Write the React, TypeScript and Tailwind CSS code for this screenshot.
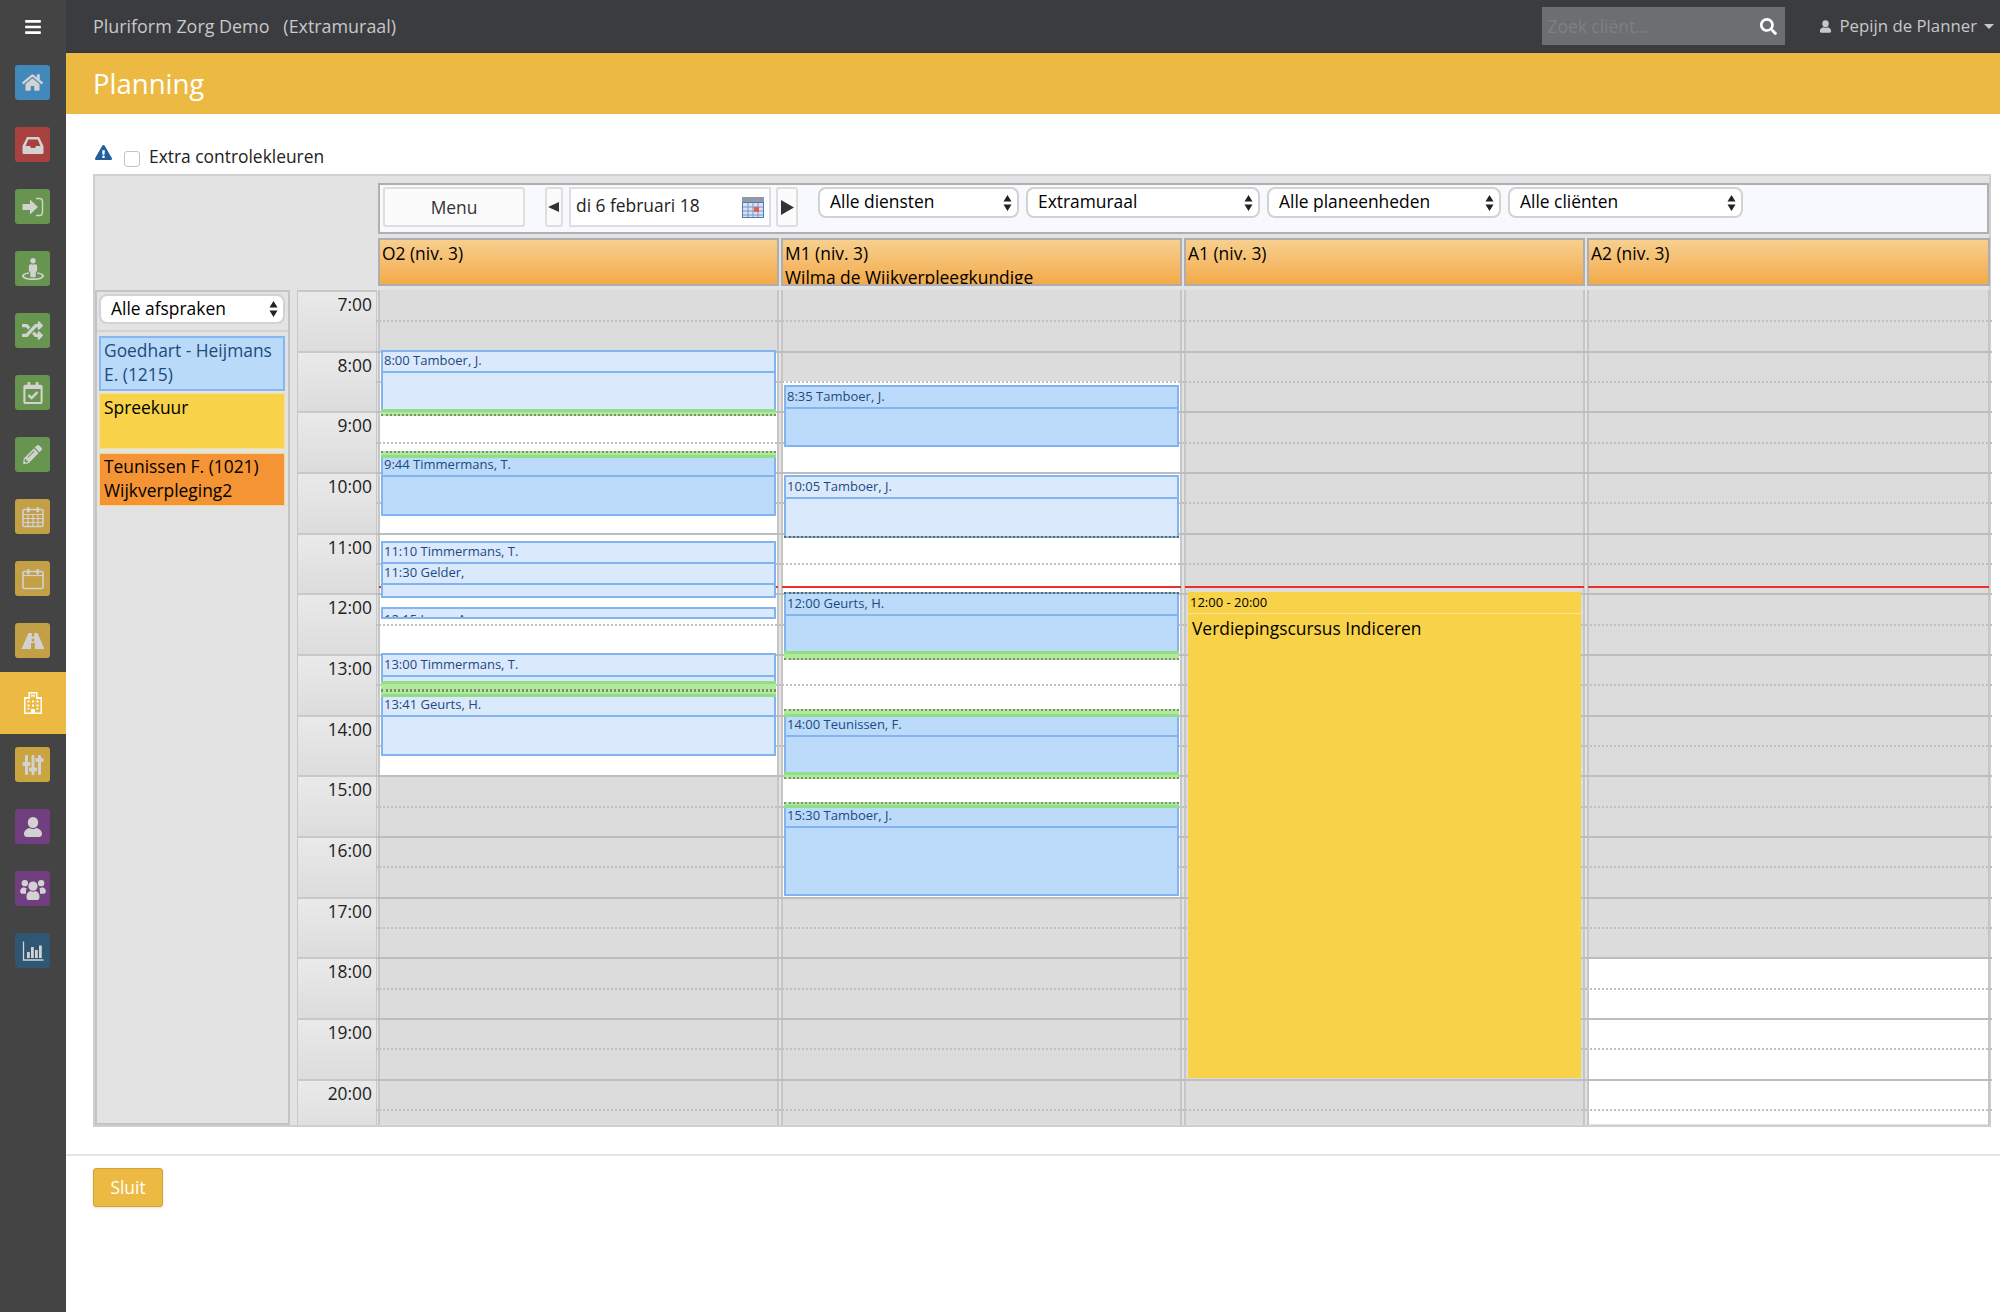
import type { ReactNode } from 'react';
import {
  FaBars,
  FaExclamationTriangle,
  FaHome,
  FaPencilAlt,
  FaRandom,
  FaRegCalendarCheck,
  FaSearch,
  FaStreetView,
} from 'react-icons/fa';

const GRID_TOP = 290;
const HOURS = [7, 8, 9, 10, 11, 12, 13, 14, 15, 16, 17, 18, 19, 20];

type Appointment = {
  top: number;
  bottom: number;
  divider: number;
  label: string;
  dark?: boolean;
  greenTop?: number;
  greenBottom?: number;
};

// y values are page pixels, measured from the reference
const columns: {
  title: string;
  sub?: string;
  white: [number, number];
  items: Appointment[];
}[] = [
  {
    title: 'O2 (niv. 3)',
    white: [2, 16],
    items: [
      { top: 350, bottom: 416, divider: 371, label: '8:00 Tamboer, J.', greenBottom: 5 },
      { top: 451, bottom: 516, divider: 475, label: '9:44 Timmermans, T.', dark: true, greenTop: 5 },
      { top: 541, bottom: 598, divider: 562, label: '11:10 Timmermans, T.' },
      { top: 562, bottom: 598, divider: 583, label: '11:30 Gelder,' },
      { top: 607, bottom: 619, divider: 700, label: '12:15 Jager, A.' },
      { top: 653, bottom: 691, divider: 675, label: '13:00 Timmermans, T.', greenBottom: 8 },
      { top: 690, bottom: 756, divider: 715, label: '13:41 Geurts, H.', greenTop: 5 },
    ],
  },
  {
    title: 'M1 (niv. 3)',
    sub: 'Wilma de Wijkverpleegkundige',
    white: [3, 20],
    items: [
      { top: 385, bottom: 447, divider: 407, label: '8:35 Tamboer, J.', dark: true },
      { top: 475, bottom: 538, divider: 497, label: '10:05 Tamboer, J.', greenBottom: 1 },
      { top: 592, bottom: 660, divider: 614, label: '12:00 Geurts, H.', dark: true, greenTop: 1, greenBottom: 7 },
      { top: 709, bottom: 779, divider: 735, label: '14:00 Teunissen, F.', dark: true, greenTop: 6, greenBottom: 5 },
      { top: 802, bottom: 896, divider: 826, label: '15:30 Tamboer, J.', dark: true, greenTop: 4 },
    ],
  },
  { title: 'A1 (niv. 3)', white: [0, 0], items: [] },
  { title: 'A2 (niv. 3)', white: [22, 28], items: [] },
];

/* Hand drawn sidebar glyphs, the icon packages have no close match for these */
function Glyph({ children, size = 24 }: { children: ReactNode; size?: number }) {
  return (
    <svg width={size} height={size} viewBox="0 0 24 24" fill="currentColor">
      {children}
    </svg>
  );
}

const InboxIcon = () => (
  <Glyph>
    <path fillRule="evenodd" d="M6 4h12l4.500 9v6.500a1.500 1.500 0 0 1-1.500 1.500H3a1.500 1.500 0 0 1-1.500-1.500V13zM7.300 6.500 4.600 13H9l1 2h4l1-2h4.400l-2.700-6.500z" />
  </Glyph>
);

const SignInIcon = () => (
  <Glyph>
    <path d="M1.500 9H9V4.500l8 7.500-8 7.500V15H1.500z" />
    <path d="M15 3.500h3.500a3 3 0 0 1 3 3v11a3 3 0 0 1-3 3H15" fill="none" stroke="currentColor" strokeWidth="1.400" />
  </Glyph>
);

const CalendarGridIcon = () => (
  <Glyph>
    <rect x="2" y="4.500" width="20" height="17" rx="1.500" fill="none" stroke="currentColor" strokeWidth="1.600" />
    <path d="M2 9.500h20M2 13.500h20M2 17.500h20M7 9.500v12M12 9.500v12M17 9.500v12" stroke="currentColor" strokeWidth="1.200" />
    <rect x="6" y="2" width="2.600" height="5.500" rx="1.200" />
    <rect x="15.400" y="2" width="2.600" height="5.500" rx="1.200" />
  </Glyph>
);

const CalendarBlankIcon = () => (
  <Glyph>
    <rect x="2" y="4.500" width="20" height="17" rx="1.500" fill="none" stroke="currentColor" strokeWidth="1.600" />
    <path d="M2 8.500h20" stroke="currentColor" strokeWidth="1.200" />
    <rect x="6" y="2" width="2.600" height="5.500" rx="1.200" />
    <rect x="15.400" y="2" width="2.600" height="5.500" rx="1.200" />
  </Glyph>
);

const RoadIcon = () => (
  <Glyph>
    <path d="M7.500 4h3.300v3.500h2.400V4h3.300L23.500 20h-9.600v-6h-3.800v6H.5zM10.800 9.500v3h2.400v-3z" fillRule="evenodd" />
  </Glyph>
);

const HospitalIcon = () => (
  <Glyph>
    <path fillRule="evenodd" d="M7.500 1h9v5H21v17H3V6h4.500zM9 2.500V8H4.500v13.500h5.500V18h4v3.500h5.500V8H15V2.500z" />
    <path d="M10.300 3.300h1v3h-1zM12.700 3.300h1v3h-1zM10.300 4.300h3.400v1h-3.400z" />
    <path d="M6.500 9.500h2v2h-2zM11 9.500h2v2h-2zM15.500 9.500h2v2h-2zM6.500 13.500h2v2h-2zM11 13.500h2v2h-2zM15.500 13.500h2v2h-2zM6.500 17h2v1.500h-2zM15.500 17h2v1.500h-2z" />
  </Glyph>
);

const SlidersIcon = () => (
  <Glyph>
    <rect x="4" y="2" width="3" height="20" rx="1" />
    <rect x="10.500" y="2" width="3" height="20" rx="1" />
    <rect x="17" y="2" width="3" height="20" rx="1" />
    <rect x="1.500" y="9" width="8" height="4" rx="1" />
    <rect x="8" y="14.500" width="8" height="4" rx="1" />
    <rect x="14.500" y="5" width="8" height="4" rx="1" />
  </Glyph>
);

const UserIcon = ({ size = 24 }: { size?: number }) => (
  <Glyph size={size}>
    <ellipse cx="12" cy="7.500" rx="5.200" ry="5.500" />
    <path d="M3 19c0-3.500 3-5.500 5.500-6 2 1.300 5 1.300 7 0 2.500.5 5.500 2.500 5.500 6 0 2-1.500 3-3 3H6c-1.500 0-3-1-3-3z" />
  </Glyph>
);

const UsersIcon = () => (
  <Glyph size={28}>
    <circle cx="5" cy="7" r="2.700" />
    <circle cx="19" cy="7" r="2.700" />
    <circle cx="12" cy="9.500" r="4" />
    <path d="M1 14c0-2 1.500-3.300 3-3.500 1 .7 1.700.8 2.500.5-.3 1.500-.6 3-.5 5H2.500C1.500 16 1 15 1 14zM23 14c0-2-1.500-3.300-3-3.500-1 .7-1.700.8-2.500.5.300 1.500.6 3 .5 5h3.500c1 0 1.500-1 1.500-2z" />
    <path d="M6.500 18c0-2.500 2-4 3.500-4.300 1.300.8 2.700.8 4 0 1.500.3 3.500 1.800 3.500 4.300v1.500c0 1.200-1 2-2 2H8.500c-1 0-2-.8-2-2z" />
  </Glyph>
);

const ChartIcon = () => (
  <Glyph>
    <path d="M2.500 2.500v18.500h20" fill="none" stroke="currentColor" strokeWidth="1.300" />
    <rect x="6" y="13" width="2.800" height="6" />
    <rect x="10" y="8" width="2.800" height="11" />
    <rect x="14" y="11" width="2.800" height="8" />
    <rect x="18" y="6.500" width="2.800" height="12.500" />
  </Glyph>
);

const sideItems: { icon: ReactNode; color: string; active?: boolean }[] = [
  { icon: <FaHome className="text-[21px]" />, color: 'bg-[#4288bb]' },
  { icon: <InboxIcon />, color: 'bg-[#a94141]' },
  { icon: <SignInIcon />, color: 'bg-[#679550]' },
  { icon: <FaStreetView className="text-[22px]" />, color: 'bg-[#679550]' },
  { icon: <FaRandom className="text-[21px]" />, color: 'bg-[#679550]' },
  { icon: <FaRegCalendarCheck className="text-[22px]" />, color: 'bg-[#679550]' },
  { icon: <FaPencilAlt className="text-[19px]" />, color: 'bg-[#679550]' },
  { icon: <CalendarGridIcon />, color: 'bg-[#c39f45]' },
  { icon: <CalendarBlankIcon />, color: 'bg-[#c39f45]' },
  { icon: <RoadIcon />, color: 'bg-[#c39f45]' },
  { icon: <HospitalIcon />, color: 'bg-[#ecba43]', active: true },
  { icon: <SlidersIcon />, color: 'bg-[#c9a441]' },
  { icon: <UserIcon />, color: 'bg-[#713f80]' },
  { icon: <UsersIcon />, color: 'bg-[#713f80]' },
  { icon: <ChartIcon />, color: 'bg-[#2f5672]' },
];

function Sidebar() {
  return (
    <aside className="flex w-[66px] flex-none flex-col bg-[#444444]">
      <div className="flex h-[65px] w-full items-start justify-center pt-[18px] text-[18px] text-white">
        <FaBars />
      </div>
      {sideItems.map((item, i) =>
        item.active ? (
          <div key={i} className="-mt-[13px] mb-[13px] flex h-[62px] w-full items-center justify-center bg-[#ecba43] text-white">
            {item.icon}
          </div>
        ) : (
          <div key={i} className="flex h-[62px] w-full flex-none pl-[15px]">
            <div className={`flex h-[35px] w-[35px] items-center justify-center rounded-[3px] text-[#d2d2d2] ${item.color}`}>
              {item.icon}
            </div>
          </div>
        ),
      )}
    </aside>
  );
}

function Stepper() {
  return (
    <svg width="9" height="18" viewBox="0 0 9 18" className="fill-[#222]">
      <path d="M4.500 1 8.500 7.500H.5zM4.500 17 .5 10.500h8z" />
    </svg>
  );
}

function SelectBox({ label, className }: { label: string; className: string }) {
  return (
    <div className={`flex items-center justify-between rounded-[8px] border-2 border-[#d2d2d2] bg-white pl-[10px] pr-[5px] text-[17.4px] text-black ${className}`}>
      <span className="-mt-[2px]">{label}</span>
      <Stepper />
    </div>
  );
}

function Toolbar() {
  return (
    <div className="flex h-[51px] border-2 border-[#b0b0b0] bg-[#f8f8ff] pl-[3px] pt-[2px]">
      <div className="flex h-[40px] w-[142px] items-center justify-center rounded-[3px] border-2 border-[#dedede] bg-[#fbfbfb] text-[17.4px] text-[#333]">
        Menu
      </div>
      <div className="ml-[20px] flex h-[40px] w-[18px] items-center justify-center rounded-[3px] border-2 border-[#dedede] bg-[#fbfbfb]">
        <svg width="12" height="12" viewBox="0 0 12 12" className="fill-[#333]">
          <path d="M11 1v10L0 6z" />
        </svg>
      </div>
      <div className="ml-[6px] flex h-[40px] w-[202px] items-center justify-between border-2 border-[#dedede] bg-white pb-[4px] pl-[5px] pr-[5px] text-[17.4px] text-[#222]">
        <span>di 6 februari 18</span>
        <svg width="22" height="21" viewBox="0 0 22 21" className="mt-[4px]">
          <rect width="22" height="21" fill="#5878b4" />
          <rect y="0" width="22" height="5" fill="#8e9aa8" />
          <rect x="1" y="6" width="20" height="14" fill="#dbe3f2" />
          <path d="M1 10h20M1 14h20M1 18h20M6 6v14M11 6v14M16 6v14" stroke="#7a93c6" strokeWidth="1" />
          <rect x="12" y="10" width="5" height="5" fill="#e0604a" />
        </svg>
      </div>
      <div className="ml-[5px] flex h-[40px] w-[22px] items-center justify-center rounded-[3px] border-2 border-[#dedede] bg-[#fbfbfb]">
        <svg width="14" height="15" viewBox="0 0 14 15" className="fill-[#333]">
          <path d="M1 0v15l13-7.500z" />
        </svg>
      </div>
      <SelectBox label="Alle diensten" className="ml-[20px] h-[31px] w-[201px]" />
      <SelectBox label="Extramuraal" className="ml-[7px] h-[31px] w-[234px]" />
      <SelectBox label="Alle planeenheden" className="ml-[7px] h-[31px] w-[234px]" />
      <SelectBox label="Alle cliënten" className="ml-[7px] h-[31px] w-[235px]" />
    </div>
  );
}

function LeftPanel() {
  return (
    <div className="h-[835px] w-[195px] flex-none border-2 border-[#c4c4c4] bg-[#e3e3e3]">
      <div className="h-[40px] border-b-2 border-[#d2d2d2] px-[2px] pt-[2px]">
        <SelectBox label="Alle afspraken" className="h-[30px] w-[186px]" />
      </div>
      <div className="flex flex-col pl-[2px] pr-[3px] pt-[4px] text-[17.4px] leading-[24px]">
        <div className="h-[55px] border-2 border-[#86b7f0] bg-[#badafa] px-[3px] text-[#1c4a7c]">
          Goedhart - Heijmans E. (1215)
        </div>
        <div className="mt-[2px] h-[56px] border border-[#f5e18c] bg-[#f8d248] px-[4px] pt-[1px] text-black">
          Spreekuur
        </div>
        <div className="mt-[4px] h-[53px] border border-[#f7d78c] bg-[#f49434] px-[4px] text-black">
          Teunissen F. (1021) Wijkverpleging2
        </div>
      </div>
    </div>
  );
}

function TimeColumn() {
  return (
    <div className="ml-[7px] h-[835px] w-[80px] flex-none overflow-hidden border-x border-[#c8c8c8]">
      {HOURS.map((h) => (
        <div key={h} className="h-[60.67px] border-t-2 border-[#c8c8c8] bg-gradient-to-b from-[#eaeaea] to-[#dcdcdc] pr-[4px] text-right text-[17.4px] leading-[24px] text-[#222]">
          {h}:00
        </div>
      ))}
    </div>
  );
}

function Green({ side, size }: { side: 'top' | 'bottom'; size: number }) {
  if (size <= 2) {
    return (
      <div
        className={
          side === 'top'
            ? 'absolute -inset-x-[2px] -top-[2px] border-t-2 border-dotted border-[#5a6a5a]'
            : 'absolute -inset-x-[2px] -bottom-[2px] border-b-2 border-dotted border-[#5a6a5a]'
        }
      />
    );
  }
  return (
    <div
      className={
        side === 'top'
          ? 'absolute -inset-x-[2px] -top-[2px] flex flex-col justify-end border-t-2 border-dotted border-[#7d8c76] bg-[#b2ea9a]'
          : 'absolute -inset-x-[2px] -bottom-[2px] border-b-2 border-dotted border-[#7d8c76] bg-[#b2ea9a]'
      }
      style={{ height: size + 2 }}
    >
      <div className="h-[3px] bg-[#8fdf8a]" />
    </div>
  );
}

function AppointmentBox({ item }: { item: Appointment }) {
  const shade = item.dark ? 'bg-[#bcdbfa]' : 'bg-[#dbe9fc]';
  const height = item.bottom - item.top;
  const headerHeight = Math.min(item.divider - item.top, height - 2);
  return (
    <div
      className={`absolute left-[1px] right-[1px] border-2 border-[#82b4f0] text-[13px] text-[#1c4a80] ${shade}`}
      style={{ top: item.top - GRID_TOP, height }}
    >
      <div
        className="flex items-center overflow-hidden border-b-2 border-[#82b4f0] pl-[1px] leading-[19px]"
        style={{ height: headerHeight, paddingTop: Math.max((item.greenTop ?? 0) - 2, 0) }}
      >
        <span className={height > 20 ? '-mt-[2px]' : 'mt-[12px]'}>{item.label}</span>
      </div>
      {item.greenTop ? <Green side="top" size={item.greenTop} /> : null}
      {item.greenBottom ? <Green side="bottom" size={item.greenBottom} /> : null}
    </div>
  );
}

function DayColumn({ index }: { index: number }) {
  const col = columns[index];
  const slots = Array.from({ length: 28 }, (_, i) => i);
  return (
    <div className={`relative mr-[2px] h-[835px] flex-none border-x-2 border-[#c6c6c6] ${index === 3 ? 'w-[403px]' : 'w-[401px]'}`}>
      {slots.map((i) => {
        const isWhite = i >= col.white[0] && i < col.white[1];
        return (
          <div key={i} className={`relative ${i === 27 ? 'h-[15px]' : 'h-[30.33px]'} ${isWhite ? 'bg-white' : 'bg-[#dcdcdc]'}`}>
            {i > 0 ? (
              <div
                className={
                  i % 2 === 0
                    ? 'absolute -inset-x-[4px] top-0 border-t-2 border-[#bdbdbd]'
                    : 'absolute -inset-x-[4px] top-0 border-t-2 border-dotted border-[#c0c0c0]'
                }
              />
            ) : null}
          </div>
        );
      })}
      {/* current time line */}
      <div className="absolute -inset-x-[1px] top-[296px] border-t-2 border-[#e8302c]" />
      {index === 2 ? (
        <div className="absolute bottom-[47px] left-[2px] right-[2px] top-[302px] bg-[#f8d248] text-black">
          <div className="h-[22px] border-b border-[#fbe38a] pl-[2px] pt-[1px] text-[13px] leading-[19px]">12:00 - 20:00</div>
          <div className="pl-[4px] pt-[2px] text-[17.4px] leading-[24px]">Verdiepingscursus Indiceren</div>
        </div>
      ) : null}
      {col.items.map((item) => (
        <AppointmentBox key={item.label} item={item} />
      ))}
    </div>
  );
}

function Calendar() {
  return (
    <div className="ml-[27px] mr-[9px] border-2 border-[#cfcfcf] bg-[#e3e3e3]">
      <div className="pl-[283px] pt-[7px]">
        <Toolbar />
        <div className="mt-[4px] flex">
          {columns.map((col, i) => (
            <div
              key={col.title}
              className={`mr-[2px] h-[48px] flex-none overflow-hidden border-2 border-[#aeaeae] bg-gradient-to-b from-[#f7cf8e] to-[#f3aa48] pl-[2px] pt-[1px] text-[17.4px] leading-[24px] text-black ${i === 3 ? 'w-[403px]' : 'w-[401px]'}`}
            >
              <div>{col.title}</div>
              {col.sub ? <div>{col.sub}</div> : null}
            </div>
          ))}
        </div>
      </div>
      <div className="mt-[4px] flex">
        <LeftPanel />
        <TimeColumn />
        <div className="ml-[1px] flex">
          {columns.map((_, i) => (
            <DayColumn key={i} index={i} />
          ))}
        </div>
      </div>
    </div>
  );
}

export default function App() {
  return (
    <div className="flex min-h-[1312px] w-[2000px] overflow-hidden bg-white font-['Open_Sans',sans-serif]">
      <Sidebar />
      <main className="min-w-0 flex-1">
        <header className="flex h-[53px] items-center justify-between border-b border-[#333539] bg-[#3a3c40] pl-[27px] pr-[6px]">
          <div className="whitespace-pre text-[17.9px] text-[#c8c8c8]">Pluriform Zorg Demo   (Extramuraal)</div>
          <div className="flex items-center">
            <div className="flex h-[38px] w-[243px] items-center justify-between bg-[#6b6f72] pl-[6px] pr-[8px]">
              <span className="text-[17.4px] text-[#7d8082]">Zoek cliënt...</span>
              <FaSearch className="text-[17px] text-white" />
            </div>
            <span className="ml-[33px] text-[#c8c8c8]">
              <UserIcon size={15} />
            </span>
            <span className="ml-[7px] text-[16.8px] text-[#c8c8c8]">Pepijn de Planner</span>
            <span className="ml-[7px] h-0 w-0 border-x-[5px] border-t-[5px] border-x-transparent border-t-[#c8c8c8]" />
          </div>
        </header>
        <div className="flex h-[61px] items-center bg-[#ecba43] pl-[27px] text-[27.5px] text-white">
          Planning
        </div>
        <div className="flex h-[60px] items-start pl-[29px] pt-[30px]">
          <FaExclamationTriangle className="text-[17px] text-[#22609c]" />
          <input type="checkbox" className="ml-[12px] mt-[7px] h-[16px] w-[16px] appearance-none rounded-[3px] border border-[#c4c4c4] bg-white" />
          <span className="ml-[9px] text-[17.4px] leading-[24px] text-[#222]">Extra controlekleuren</span>
        </div>
        <Calendar />
        <div className="mt-[27px] border-t-2 border-[#e5e5e5] pl-[27px] pt-[12px]">
          <button className="h-[39px] w-[70px] rounded-[3px] border border-[#d4a52f] bg-[#ecba43] text-[17.4px] text-white shadow-sm">
            Sluit
          </button>
        </div>
      </main>
    </div>
  );
}
